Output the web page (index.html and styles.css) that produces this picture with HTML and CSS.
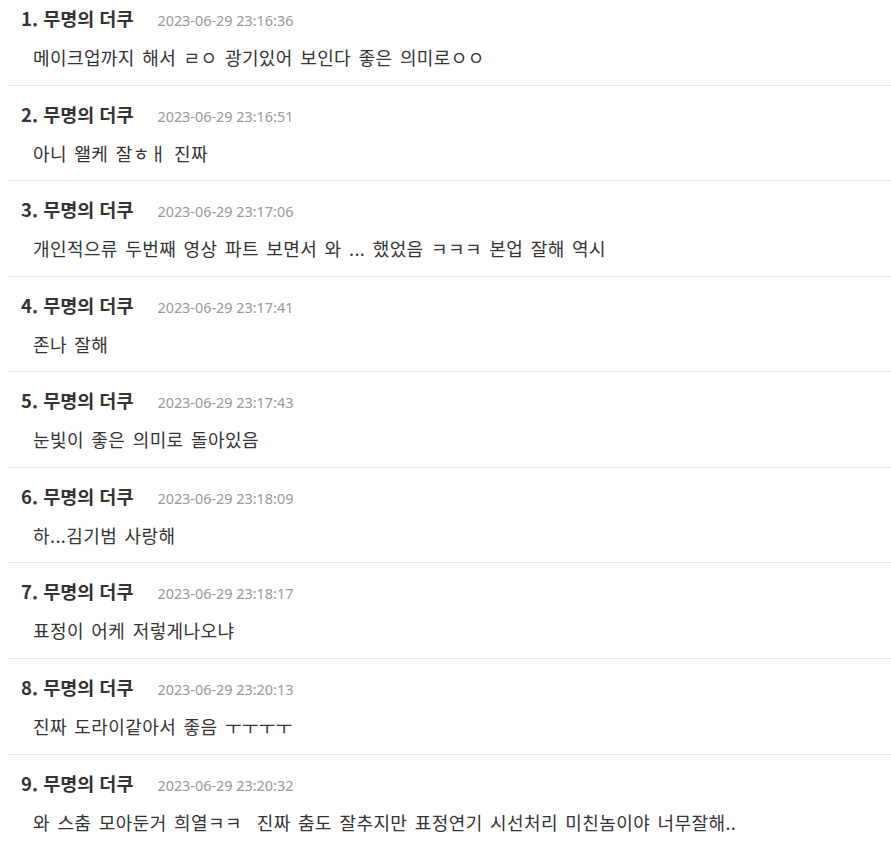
FILE: index.html
```html
<!DOCTYPE html>
<html lang="ko">
<head>
<meta charset="utf-8">
<link rel="stylesheet" href="styles.css">
</head>
<body>
<ul class="list">
  <li class="item"><div class="head"><span class="name">1. 무명의 더쿠</span><span class="date">2023-06-29 23:16:36</span></div><p class="text">메이크업까지 해서 ㄹㅇ 광기있어 보인다 좋은 의미로ㅇㅇ</p></li>
  <li class="item"><div class="head"><span class="name">2. 무명의 더쿠</span><span class="date">2023-06-29 23:16:51</span></div><p class="text">아니 왤케 잘ㅎㅐ 진짜</p></li>
  <li class="item"><div class="head"><span class="name">3. 무명의 더쿠</span><span class="date">2023-06-29 23:17:06</span></div><p class="text">개인적으류 두번째 영상 파트 보면서 와 ... 했었음 ㅋㅋㅋ 본업 잘해 역시</p></li>
  <li class="item"><div class="head"><span class="name">4. 무명의 더쿠</span><span class="date">2023-06-29 23:17:41</span></div><p class="text">존나 잘해</p></li>
  <li class="item"><div class="head"><span class="name">5. 무명의 더쿠</span><span class="date">2023-06-29 23:17:43</span></div><p class="text">눈빛이 좋은 의미로 돌아있음</p></li>
  <li class="item"><div class="head"><span class="name">6. 무명의 더쿠</span><span class="date">2023-06-29 23:18:09</span></div><p class="text">하...김기범 사랑해</p></li>
  <li class="item"><div class="head"><span class="name">7. 무명의 더쿠</span><span class="date">2023-06-29 23:18:17</span></div><p class="text">표정이 어케 저렇게나오냐</p></li>
  <li class="item"><div class="head"><span class="name">8. 무명의 더쿠</span><span class="date">2023-06-29 23:20:13</span></div><p class="text">진짜 도라이같아서 좋음 ㅜㅜㅜㅜ</p></li>
  <li class="item"><div class="head"><span class="name">9. 무명의 더쿠</span><span class="date">2023-06-29 23:20:32</span></div><p class="text">와 스춤 모아둔거 희열ㅋㅋ &nbsp;진짜 춤도 잘추지만 표정연기 시선처리 미친놈이야 너무잘해..</p></li>
</ul>
</body>
</html>
```
FILE: styles.css
```css
html, body {
  margin: 0;
  padding: 0;
  background: #fff;
}
body {
  font-family: "Noto Sans CJK KR", "Noto Sans", sans-serif;
  color: #333;
}
.list {
  list-style: none;
  margin: 0 0 0 8px;
  padding: 0;
}
.item {
  border-top: 1px solid #e8e8e8;
  padding: 16px 0 15.57px 13px;
}
.item:first-child {
  border-top: none;
  padding-top: 6px;
}
.head {
  display: flex;
  align-items: baseline;
  height: 24px;
  line-height: 24px;
}
.name {
  font-size: 18.5px;
  font-weight: 700;
  color: #333;
}
.date {
  margin-left: 24px;
  font-family: "Noto Sans", sans-serif;
  font-size: 14.4px;
  color: #999;
}
.text {
  margin: 15px 0 0 12px;
  font-size: 18px;
  letter-spacing: 0.4px;
  word-spacing: 2px;
  line-height: 24px;
  color: #333;
}
```
